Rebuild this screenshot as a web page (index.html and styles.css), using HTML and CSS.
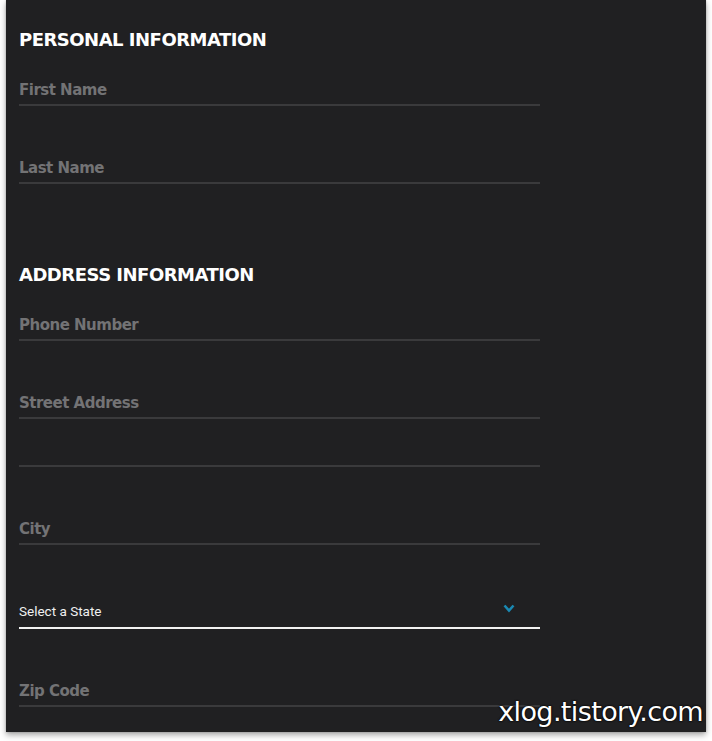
FILE: index.html
```html
<!DOCTYPE html>
<html>
<head>
<meta charset="utf-8">
<link rel="stylesheet" href="styles.css">
</head>
<body>
<div class="panel">
  <h2 class="heading">PERSONAL INFORMATION</h2>
  <div class="field f-first"><span class="label">First Name</span></div>
  <div class="field"><span class="label">Last Name</span></div>

  <h2 class="heading h-address">ADDRESS INFORMATION</h2>
  <div class="field f-first"><span class="label">Phone Number</span></div>
  <div class="field"><span class="label">Street Address</span></div>
  <div class="field f-blank"></div>
  <div class="field"><span class="label">City</span></div>
  <div class="field select">
    <span class="select-text">Select a State</span>
    <svg class="chevron" width="12" height="9" viewBox="0 0 12 9"><path d="M1.5 1.5 L6 6.5 L10.5 1.5" fill="none" stroke="#1a89b3" stroke-width="2.6"/></svg>
  </div>
  <div class="field"><span class="label">Zip Code</span></div>

  <div class="watermark">xlog.tistory.com</div>
</div>
</body>
</html>
```
FILE: styles.css
```css
html, body {
  margin: 0;
  padding: 0;
  background: #ffffff;
}
body {
  padding: 0 6px 0 6px;
  width: 700px;
  height: 741px;
}
.panel {
  position: relative;
  background: #202022;
  height: 732px;
  padding: 29px 0 0 13px;
  box-sizing: border-box;
  box-shadow: 0 3px 6px rgba(0,0,0,0.35), 0 0 2px rgba(0,0,0,0.2);
}
.heading {
  margin: 0;
  font-family: "DejaVu Sans", sans-serif;
  font-weight: bold;
  font-size: 18px;
  line-height: 22px;
  color: #ffffff;
  letter-spacing: -0.5px;
}
.h-address {
  margin-top: 80px;
}
.field {
  width: 521px;
  height: 78px;
  box-sizing: border-box;
  border-bottom: 2px solid #3a3a3c;
  display: flex;
  align-items: flex-end;
  padding-bottom: 5px;
}
.f-first {
  height: 55px;
}
.f-blank {
  height: 48px;
}
.label {
  font-family: "DejaVu Sans", sans-serif;
  font-weight: bold;
  font-size: 15px;
  line-height: 18px;
  color: #737375;
  letter-spacing: -0.5px;
}
.select {
  height: 84px;
  border-bottom-color: #f2f2f2;
  justify-content: space-between;
  padding-bottom: 8px;
  padding-right: 25px;
}
.select-text {
  font-family: Roboto, sans-serif;
  font-size: 13.5px;
  line-height: 16px;
  color: #f0f0f0;
}
.chevron {
  margin-bottom: 6px;
}
.watermark {
  position: absolute;
  right: 3px;
  bottom: 5px;
  font-family: "DejaVu Sans", sans-serif;
  font-size: 27px;
  color: #ffffff;
  letter-spacing: -0.6px;
  text-shadow: 0 0 2px #000, 0 0 2px #000;
}
```
